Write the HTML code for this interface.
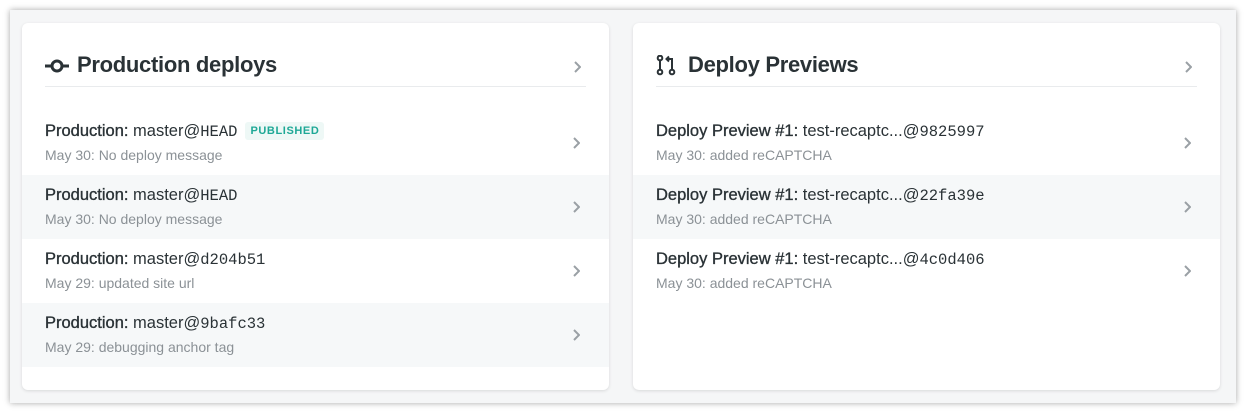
<!DOCTYPE html>
<html><head><style>
*{box-sizing:border-box;margin:0;padding:0}
body{width:1246px;height:413px;background:#fff;font-family:"Liberation Sans",sans-serif;position:relative;overflow:hidden}
.frame{position:absolute;left:10px;top:10px;width:1226px;height:393px;background:#f5f6f7;box-shadow:0 0 6px rgba(0,0,0,.35)}
.card{position:absolute;top:13px;width:587px;height:367px;background:#fff;border-radius:6px;box-shadow:0 1px 3px rgba(0,0,0,.12)}
.hd{position:absolute;left:23px;right:23px;top:28px;height:36px;border-bottom:1px solid #e9ebed}
.hd h2{position:absolute;left:32px;top:1px;font-size:22px;font-weight:bold;color:#2a3236;letter-spacing:-.3px}
.hd svg.ic{position:absolute;left:0;top:6px}
.chev{position:absolute;right:29px;width:7px;height:12px}
.row{position:absolute;left:0;right:0;height:64px}
.row.g{background:#f6f8f9}
.t{position:absolute;left:23px;top:11px;font-size:16.5px;color:#2a3236}
.t b{font-weight:normal;-webkit-text-stroke:.35px #2a3236}
.m{font-family:"Liberation Mono",monospace;font-size:15.5px}
.s{position:absolute;left:23px;top:36px;font-size:14px;color:#8b9196}
.pub{display:inline-block;margin-left:8px;background:#eef8f6;color:#1ea896;font-size:11px;font-weight:bold;letter-spacing:.6px;padding:3px 5px;border-radius:3px;vertical-align:2px}
</style></head><body>
<div class="frame">
<div class="card" style="left:12px">
 <div class="hd"><svg class="ic" width="26" height="20" viewBox="0 0 26 20"><line x1="0" y1="9" x2="24" y2="9" stroke="#2a3236" stroke-width="3"/><circle cx="12" cy="9" r="5" fill="#fff" stroke="#2a3236" stroke-width="3"/></svg><h2>Production deploys</h2>
 <svg class="chev" style="right:5px;top:10px" viewBox="0 0 7 12"><path d="M1 1l5 5-5 5" fill="none" stroke="#9aa0a5" stroke-width="2"/></svg></div>
 <div class="row" style="top:88px"><div class="t"><b>Production:</b> master@<span class="m">HEAD</span><span class="pub">PUBLISHED</span></div><div class="s">May 30: No deploy message</div><svg class="chev" style="top:26px" viewBox="0 0 7 12"><path d="M1 1l5 5-5 5" fill="none" stroke="#9aa0a5" stroke-width="2"/></svg></div>
 <div class="row g" style="top:152px"><div class="t"><b>Production:</b> master@<span class="m">HEAD</span></div><div class="s">May 30: No deploy message</div><svg class="chev" style="top:26px" viewBox="0 0 7 12"><path d="M1 1l5 5-5 5" fill="none" stroke="#9aa0a5" stroke-width="2"/></svg></div>
 <div class="row" style="top:216px"><div class="t"><b>Production:</b> master@<span class="m">d204b51</span></div><div class="s">May 29: updated site url</div><svg class="chev" style="top:26px" viewBox="0 0 7 12"><path d="M1 1l5 5-5 5" fill="none" stroke="#9aa0a5" stroke-width="2"/></svg></div>
 <div class="row g" style="top:280px"><div class="t"><b>Production:</b> master@<span class="m">9bafc33</span></div><div class="s">May 29: debugging anchor tag</div><svg class="chev" style="top:26px" viewBox="0 0 7 12"><path d="M1 1l5 5-5 5" fill="none" stroke="#9aa0a5" stroke-width="2"/></svg></div>
</div>
<div class="card" style="left:623px">
 <div class="hd"><svg class="ic" width="22" height="22" viewBox="0 0 22 22" style="top:4px"><circle cx="4" cy="3" r="2.3" fill="none" stroke="#2a3236" stroke-width="2"/><circle cx="4" cy="17" r="2.3" fill="none" stroke="#2a3236" stroke-width="2"/><line x1="4" y1="5.5" x2="4" y2="14.5" stroke="#2a3236" stroke-width="2"/><circle cx="16" cy="17" r="2.3" fill="none" stroke="#2a3236" stroke-width="2"/><path d="M16 14.5V4h-5M13 1.5L10.5 4 13 6.5" fill="none" stroke="#2a3236" stroke-width="2"/></svg><h2>Deploy Previews</h2>
 <svg class="chev" style="right:5px;top:10px" viewBox="0 0 7 12"><path d="M1 1l5 5-5 5" fill="none" stroke="#9aa0a5" stroke-width="2"/></svg></div>
 <div class="row" style="top:88px"><div class="t"><b>Deploy Preview #1:</b> test-recaptc...@<span class="m">9825997</span></div><div class="s">May 30: added reCAPTCHA</div><svg class="chev" style="top:26px" viewBox="0 0 7 12"><path d="M1 1l5 5-5 5" fill="none" stroke="#9aa0a5" stroke-width="2"/></svg></div>
 <div class="row g" style="top:152px"><div class="t"><b>Deploy Preview #1:</b> test-recaptc...@<span class="m">22fa39e</span></div><div class="s">May 30: added reCAPTCHA</div><svg class="chev" style="top:26px" viewBox="0 0 7 12"><path d="M1 1l5 5-5 5" fill="none" stroke="#9aa0a5" stroke-width="2"/></svg></div>
 <div class="row" style="top:216px"><div class="t"><b>Deploy Preview #1:</b> test-recaptc...@<span class="m">4c0d406</span></div><div class="s">May 30: added reCAPTCHA</div><svg class="chev" style="top:26px" viewBox="0 0 7 12"><path d="M1 1l5 5-5 5" fill="none" stroke="#9aa0a5" stroke-width="2"/></svg></div>
</div>
</div>
</body></html>
